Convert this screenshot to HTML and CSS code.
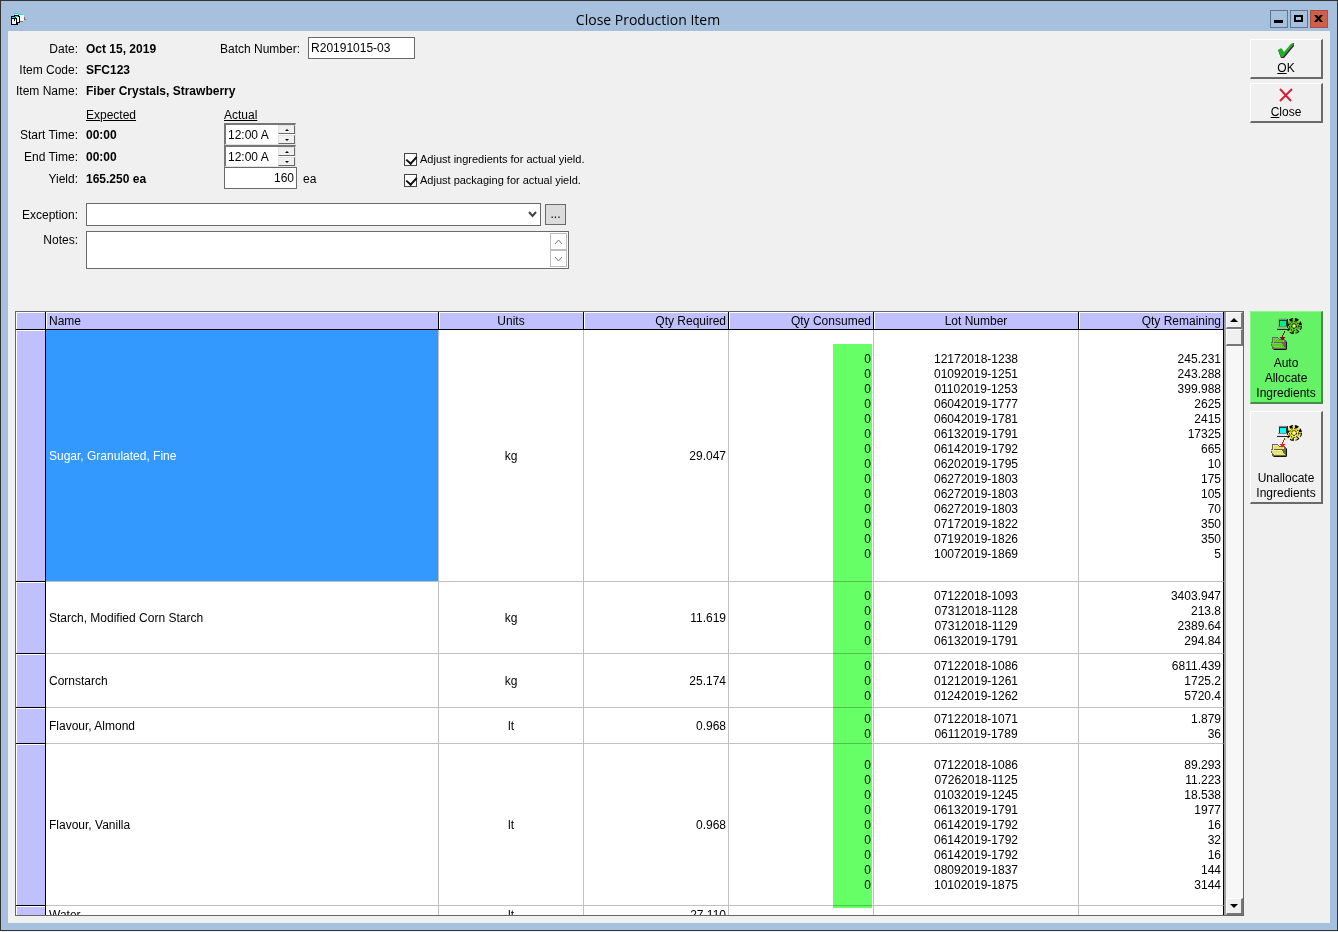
FILE: index.html
```html
<!DOCTYPE html>
<html lang="en">

<head>
    <meta charset="UTF-8">
    <title>Close Production Item</title>
    <link rel="stylesheet" href="styles.css">
</head>

<body>
    <!-- icon shared by the two allocate buttons -->
    <svg class="defs" width="0" height="0" aria-hidden="true">
        <symbol id="allocate" viewBox="0 0 32 32">
            <!-- gear -->
            <circle cx="24" cy="8" r="6.500" fill="none" stroke="#000" stroke-width="3" stroke-dasharray="3.500 1.600" />
            <circle cx="24" cy="8" r="6" fill="none" class="gear-teeth" stroke-width="2" stroke-dasharray="2.500 2.600" stroke-dashoffset="-.500" />
            <circle class="gear" cx="24" cy="8" r="5" />
            <circle cx="24" cy="8" r="4.500" fill="none" stroke="#111" stroke-dasharray="1.500 1.500" />
            <circle cx="24" cy="8" r="2.500" fill="none" stroke="#000" stroke-dasharray="2 1" />
            <circle cx="24" cy="8" r="1" fill="#fff" />
            <g shape-rendering="crispEdges">
                <!-- computer -->
                <path d="M8 1h10v8H8z" fill="#7d8a8a" />
                <path class="case" d="M8 0h9v1H9v7H8zM8 9h10v2H7v-1h1z" />
                <path d="M9 2h8v6H9z" fill="#333" />
                <path class="screen" d="M10 3h6v5h-6z" />
                <path d="M7 11h11v1H7zM17 1h1v9h-1z" fill="#222" />
                <!-- folder -->
                <path d="M2 19h5l2 2h6l2 3v7l-1 1H3l-2-5v-3h1z" fill="#666" />
                <path class="case" d="M3 20h4l2 2h5v2H5l-2 1z" />
                <path class="folder" d="M4 21h3l2 1h4v2H4z" />
                <path class="folder" d="M1 25h11l3 5H4z" />
                <path class="case" d="M1 25h11v1H2zM3 28h9v1H3z" />
                <path d="M4 31h12v1H4zM16 24h1v7h-1z" fill="#111" />
            </g>
            <path class="arrow" d="M15 13v2h-1v2h-1v2h2.500l-3 3.500-3-3.500H12v-2h1v-2h1v-2z" />
        </symbol>
    </svg>

    <div class="window">
        <header class="title-bar">
            <svg class="app-icon" width="16" height="16" viewBox="0 0 16 16" shape-rendering="crispEdges">
                <path d="M5 3h8v1h1v6h-3v1H6z" fill="#f4f4f4" />
                <path d="M4 2h4v1H4zM8 3h5v1H8zM6 4h3v1H6z" fill="#00e5e5" />
                <path d="M14 6h1v2h1v1h-2zM10 10h3v1h-3z" fill="#777" />
                <path d="M4 4h5v1h1v7H8v2H1V5h3z" fill="#000" />
                <path d="M2 8h4v5H2zM6 6h3v5H7V7H6z" fill="#fff" />
                <path d="M2 6h3v1H2zM5 5h3v1H5z" fill="#00e5e5" />
                <path d="M4 8h1v2H4z" fill="#000" />
            </svg>
            <h1>Close Production Item</h1>
            <div class="window-buttons">
                <button type="button" aria-label="Minimize">
                    <svg width="16" height="16" viewBox="0 0 16 16"><path d="M3 9h9v3H3z" /></svg>
                </button>
                <button type="button" aria-label="Maximize">
                    <svg width="16" height="16" viewBox="0 0 16 16"><path fill-rule="evenodd" d="M3 4h9v7H3zM5 6v3h5V6z" /></svg>
                </button>
                <button type="button" class="win-close" aria-label="Close window">
                    <svg width="16" height="16" viewBox="0 0 16 16"><path d="M3 4h3l1.500 2L9 4h3L9 7.500l3 3.500H9L7.500 9 6 11H3l3-3.500z" /></svg>
                </button>
            </div>
        </header>

        <main class="content">
            <form class="top">
                <div class="fields">
                    <div class="row">
                        <span class="label">Date:</span>
                        <b class="date">Oct 15, 2019</b>
                        <label for="batch">Batch Number:</label>
                        <input type="text" id="batch" class="text-box batch" value="R20191015-03">
                    </div>
                    <div class="row info">
                        <span class="label">Item Code:</span>
                        <b>SFC123</b>
                    </div>
                    <div class="row info">
                        <span class="label">Item Name:</span>
                        <b>Fiber Crystals, Strawberry</b>
                    </div>

                    <div class="actuals">
                        <div class="times">
                            <div class="row heads">
                                <span class="label"></span>
                                <span class="expected"><u>Expected</u></span>
                                <span><u>Actual</u></span>
                            </div>
                            <div class="row">
                                <label class="label" for="start">Start Time:</label>
                                <b class="expected">00:00</b>
                                <div class="spinner">
                                    <input type="text" id="start" value="12:00 A">
                                    <div class="spin-buttons">
                                        <button type="button" aria-label="Later start"><i class="tri up"></i></button>
                                        <button type="button" aria-label="Earlier start"><i class="tri down"></i></button>
                                    </div>
                                </div>
                            </div>
                            <div class="row">
                                <label class="label" for="end">End Time:</label>
                                <b class="expected">00:00</b>
                                <div class="spinner">
                                    <input type="text" id="end" value="12:00 A">
                                    <div class="spin-buttons">
                                        <button type="button" aria-label="Later end"><i class="tri up"></i></button>
                                        <button type="button" aria-label="Earlier end"><i class="tri down"></i></button>
                                    </div>
                                </div>
                            </div>
                            <div class="row">
                                <label class="label" for="yield">Yield:</label>
                                <b class="expected">165.250 ea</b>
                                <div class="yield">
                                    <input type="text" id="yield" class="text-box" value="160">
                                    <span>ea</span>
                                </div>
                            </div>
                        </div>
                        <div class="checks">
                            <label><input type="checkbox" checked>Adjust ingredients for actual yield.</label>
                            <label><input type="checkbox" checked>Adjust packaging for actual yield.</label>
                        </div>
                    </div>

                    <div class="row exception">
                        <label class="label" for="exception">Exception:</label>
                        <div class="drop-down">
                            <select id="exception">
                                <option></option>
                            </select>
                            <svg width="9" height="7" viewBox="0 0 9 7"><path d="M1 1l3.500 4L8 1" /></svg>
                        </div>
                        <button type="button" class="more">...</button>
                    </div>
                    <div class="row notes">
                        <label class="label" for="notes">Notes:</label>
                        <div class="notes-box">
                            <textarea id="notes"></textarea>
                            <div class="notes-scroll">
                                <button type="button" aria-label="Scroll notes up">
                                    <svg width="9" height="6" viewBox="0 0 9 6"><path d="M1 5l3.500-4L8 5" /></svg>
                                </button>
                                <button type="button" aria-label="Scroll notes down">
                                    <svg width="9" height="6" viewBox="0 0 9 6"><path d="M1 1l3.500 4L8 1" /></svg>
                                </button>
                            </div>
                        </div>
                    </div>
                </div>

                <div class="buttons">
                    <button type="button" class="btn small">
                        <svg width="18" height="17" viewBox="0 0 18 17">
                            <path d="M1 8l4-1 2 4 7-9 3-1v3L7 16H4z" fill="#4a1050" />
                            <path d="M1 8l3-2 3 4 7-8h3L6 15H4z" fill="#1fb31f" />
                        </svg>
                        <span><u>O</u>K</span>
                    </button>
                    <button type="button" class="btn small">
                        <svg width="18" height="17" viewBox="0 0 18 17">
                            <path d="M3 3l11 12M15 3L3 15" fill="none" stroke="#d81e3a" stroke-width="2" />
                        </svg>
                        <span><u>C</u>lose</span>
                    </button>
                </div>
            </form>

            <div class="bottom">
                <div class="grid">
                    <div class="grid-view">
                        <table>
                            <colgroup>
                                <col class="c-head">
                                <col>
                                <col class="c-mid">
                                <col class="c-mid">
                                <col class="c-mid">
                                <col class="c-lot">
                                <col class="c-mid">
                            </colgroup>
                            <thead>
                                <tr>
                                    <th></th>
                                    <th class="left">Name</th>
                                    <th>Units</th>
                                    <th class="right">Qty Required</th>
                                    <th class="right">Qty Consumed</th>
                                    <th>Lot Number</th>
                                    <th class="right">Qty Remaining</th>
                                </tr>
                            </thead>
                            <tbody>
                                <tr class="h14">
                                    <th></th>
                                    <td class="left selected">Sugar, Granulated, Fine</td>
                                    <td>kg</td>
                                    <td class="right">29.047</td>
                                    <td class="right">0<br>0<br>0<br>0<br>0<br>0<br>0<br>0<br>0<br>0<br>0<br>0<br>0<br>0</td>
                                    <td>12172018-1238<br>01092019-1251<br>01102019-1253<br>06042019-1777<br>06042019-1781<br>06132019-1791<br>06142019-1792<br>06202019-1795<br>06272019-1803<br>06272019-1803<br>06272019-1803<br>07172019-1822<br>07192019-1826<br>10072019-1869</td>
                                    <td class="right">245.231<br>243.288<br>399.988<br>2625<br>2415<br>17325<br>665<br>10<br>175<br>105<br>70<br>350<br>350<br>5</td>
                                </tr>
                                <tr class="h4">
                                    <th></th>
                                    <td class="left">Starch, Modified Corn Starch</td>
                                    <td>kg</td>
                                    <td class="right">11.619</td>
                                    <td class="right">0<br>0<br>0<br>0</td>
                                    <td>07122018-1093<br>07312018-1128<br>07312018-1129<br>06132019-1791</td>
                                    <td class="right">3403.947<br>213.8<br>2389.64<br>294.84</td>
                                </tr>
                                <tr class="h3">
                                    <th></th>
                                    <td class="left">Cornstarch</td>
                                    <td>kg</td>
                                    <td class="right">25.174</td>
                                    <td class="right">0<br>0<br>0</td>
                                    <td>07122018-1086<br>01212019-1261<br>01242019-1262</td>
                                    <td class="right">6811.439<br>1725.2<br>5720.4</td>
                                </tr>
                                <tr class="h2">
                                    <th></th>
                                    <td class="left">Flavour, Almond</td>
                                    <td>lt</td>
                                    <td class="right">0.968</td>
                                    <td class="right">0<br>0</td>
                                    <td>07122018-1071<br>06112019-1789</td>
                                    <td class="right">1.879<br>36</td>
                                </tr>
                                <tr class="h9">
                                    <th></th>
                                    <td class="left">Flavour, Vanilla</td>
                                    <td>lt</td>
                                    <td class="right">0.968</td>
                                    <td class="right">0<br>0<br>0<br>0<br>0<br>0<br>0<br>0<br>0</td>
                                    <td>07122018-1086<br>07262018-1125<br>01032019-1245<br>06132019-1791<br>06142019-1792<br>06142019-1792<br>06142019-1792<br>08092019-1837<br>10102019-1875</td>
                                    <td class="right">89.293<br>11.223<br>18.538<br>1977<br>16<br>32<br>16<br>144<br>3144</td>
                                </tr>
                                <tr class="h1">
                                    <th></th>
                                    <td class="left">Water</td>
                                    <td>lt</td>
                                    <td class="right">27.110</td>
                                    <td></td>
                                    <td></td>
                                    <td></td>
                                </tr>
                            </tbody>
                        </table>
                        <!-- marker over the consumed quantities -->
                        <div class="highlight"></div>
                    </div>
                    <div class="scroll-bar">
                        <button type="button" aria-label="Scroll up"><i class="tri up"></i></button>
                        <div class="thumb"></div>
                        <div class="track"></div>
                        <button type="button" aria-label="Scroll down"><i class="tri down"></i></button>
                    </div>
                </div>
                <div class="buttons">
                    <button type="button" class="btn big auto">
                        <svg width="32" height="32"><use href="#allocate" /></svg>
                        <span>Auto<br>Allocate<br>Ingredients</span>
                    </button>
                    <button type="button" class="btn big">
                        <svg width="32" height="32"><use href="#allocate" /></svg>
                        <span>Unallocate<br>Ingredients</span>
                    </button>
                </div>
            </div>
        </main>
    </div>
</body>

</html>
```
FILE: styles.css
```css
* {
    box-sizing: border-box;
}

body {
    margin: 0;
    font: 12px/15px "Liberation Sans", Arial, sans-serif;
    color: #000;
    background: #f0f0f0;
}

button,
input,
select,
textarea {
    margin: 0;
    padding: 0;
    font: inherit;
    color: inherit;
    border-radius: 0;
}

.defs {
    position: absolute;
}

/* window frame */
.window {
    display: flex;
    flex-direction: column;
    height: calc(100vh - 1px);
    border: 1px solid #333;
    padding: 0 7px 7px 7px;
    background: #a6c0de;
}

.title-bar {
    flex: none;
    display: flex;
    align-items: center;
    height: 30px;
    padding: 6px 2px 0 2px;
}

.app-icon {
    flex: none;
}

.title-bar h1 {
    flex: 1;
    margin: 0;
    padding-top: 1px;
    text-align: center;
    font: 14px/18px "Open Sans", "Noto Sans", sans-serif;
}

.window-buttons {
    display: flex;
    gap: 2px;
}

.window-buttons button {
    width: 18px;
    height: 18px;
    border: 1px solid #5f7590;
    background: #a6c0de;
}

.window-buttons svg {
    display: block;
}

.window-buttons .win-close {
    border-color: #a8503f;
    background: #cf5f4b;
}

.content {
    flex: 1;
    min-height: 0;
    display: flex;
    flex-direction: column;
    padding: 6px 7px 7px 7px;
    background: #f0f0f0;
}

/* form */
.top {
    flex: none;
    display: flex;
    justify-content: space-between;
    min-height: 274px;
}

.row {
    display: flex;
    align-items: center;
    gap: 8px;
    height: 22px;
}

.row.info {
    height: 21px;
}

.row.heads {
    height: 17px;
}

.row span,
.row b,
.row label {
    padding-top: 2px;
}

.label {
    flex: none;
    width: 63px;
    text-align: right;
    white-space: nowrap;
}

.date {
    width: 126px;
}

.expected {
    width: 130px;
}

.text-box {
    height: 22px;
    border: 1px solid #6a6a6a;
    padding: 0 2px;
    background: #fff;
}

.batch {
    width: 107px;
}

.actuals {
    display: flex;
    margin-top: 5px;
}

.times {
    width: 389px;
}

.spinner {
    display: flex;
    width: 72px;
    height: 22px;
    border: 1px solid #e3e3e3;
    border-top: 2px solid #777;
    border-left: 2px solid #777;
    background: #fff;
}

.spinner input {
    width: 52px;
    border: 0;
    padding: 1px 0 0 2px;
    background: none;
}

.spin-buttons {
    display: flex;
    flex-direction: column;
    gap: 1px;
}

.spin-buttons button {
    display: flex;
    align-items: center;
    justify-content: center;
    width: 17px;
    height: 9px;
    border: 1px solid #e3e3e3;
    border-right-color: #696969;
    border-bottom-color: #696969;
    background: #f0f0f0;
}

.tri {
    border: 4px solid transparent;
}

.spin-buttons .tri {
    border-width: 2px;
}

.tri.up {
    border-top: 0;
    border-bottom-color: #000;
}

.tri.down {
    border-bottom: 0;
    border-top-color: #000;
}

.spin-buttons .up {
    border-top: 0;
}

.spin-buttons .down {
    border-bottom: 0;
}

.yield {
    display: flex;
    align-items: center;
    gap: 6px;
}

.yield input {
    width: 73px;
    text-align: right;
}

.checks {
    padding-top: 43px;
    font-size: 11px;
}

.checks label {
    display: flex;
    align-items: center;
    gap: 3px;
    height: 21px;
}

.checks input {
    appearance: none;
    position: relative;
    width: 13px;
    height: 13px;
    border: 1px solid #444;
    background: #fff;
}

.checks input:checked::after {
    content: "";
    position: absolute;
    left: 3px;
    top: 0;
    width: 5px;
    height: 8px;
    border: solid #111;
    border-width: 0 2px 2px 0;
    transform: rotate(42deg);
}

.exception {
    height: 23px;
    margin-top: 12px;
}

.drop-down {
    position: relative;
    width: 455px;
    height: 23px;
}

.drop-down select {
    appearance: none;
    display: block;
    width: 100%;
    height: 100%;
    border: 1px solid #6a6a6a;
    background: #fff;
}

.drop-down svg {
    position: absolute;
    right: 4px;
    top: 8px;
    fill: none;
    stroke: #444;
    stroke-width: 2;
    pointer-events: none;
}

.more {
    width: 21px;
    height: 21px;
    margin-left: -4px;
    border: 1px solid #6a6a6a;
    background: #dcdcdc;
}

.notes {
    align-items: flex-start;
    height: 38px;
    margin-top: 5px;
}

.notes-box {
    display: flex;
    width: 483px;
    height: 38px;
    border: 1px solid #6a6a6a;
    padding: 1px;
    background: #fff;
}

.notes-box textarea {
    flex: 1;
    border: 0;
    resize: none;
    overflow: hidden;
    background: none;
}

.notes-scroll {
    display: flex;
    flex-direction: column;
}

.notes-scroll button {
    display: flex;
    align-items: center;
    justify-content: center;
    width: 17px;
    height: 17px;
    border: 1px solid #bdbdbd;
    background: #fff;
}

.notes-scroll svg {
    fill: none;
    stroke: #777;
}

/* raised buttons on the right */
.buttons {
    flex: none;
    width: 73px;
    display: flex;
    flex-direction: column;
    gap: 4px;
    padding-top: 2px;
}

.btn {
    --screen: #0ff;
    --paint: #f0e838;
    --case: #e4e4e4;
    --arrow: #f01818;
    display: flex;
    flex-direction: column;
    align-items: center;
    border: 1px solid #fff;
    border-right: 2px solid #6a6a6a;
    border-bottom: 2px solid #6a6a6a;
    background: #f0f0f0;
}

.btn.small {
    height: 40px;
    padding-top: 2px;
}

.btn.small span {
    line-height: 18px;
}

.btn.big {
    height: 93px;
    justify-content: space-between;
    padding: 13px 0 1px 0;
}

.btn.auto {
    --screen: #00f088;
    --paint: #68c818;
    --case: #60d860;
    --arrow: #801010;
    padding-top: 6px;
    border-color: #8df58d #4c8a4c #4c8a4c #8df58d;
    background: #66f266;
}

.screen {
    fill: var(--screen);
}

.case {
    fill: var(--case);
}

.gear,
.folder {
    fill: var(--paint);
}

.gear-teeth {
    stroke: var(--paint);
}

.arrow {
    fill: var(--arrow);
}

/* ingredients grid */
.bottom {
    flex: 1;
    min-height: 0;
    display: flex;
    gap: 6px;
}

.bottom .buttons {
    gap: 7px;
    padding-top: 0;
}

.grid {
    flex: 1;
    display: flex;
    border: 1px solid #666;
    background: #fff;
}

.grid-view {
    flex: 1;
    position: relative;
    overflow: hidden;
}

table {
    width: 100%;
    table-layout: fixed;
    border-collapse: separate;
    border-spacing: 0;
}

.c-head {
    width: 30px;
}

.c-mid {
    width: 145px;
}

.c-lot {
    width: 205px;
}

th,
td {
    padding: 2px 2px 0 2px;
    text-align: center;
    font-weight: normal;
}

th {
    border-right: 1px solid #000;
    border-bottom: 1px solid #000;
    background: #c0c0ff;
    box-shadow: inset 1px 1px #fff;
}

thead th {
    height: 18px;
}

td {
    border-right: 1px solid #c0c0c0;
    border-bottom: 1px solid #c0c0c0;
}

td:last-child {
    border-right-color: #000;
}

.left {
    padding-left: 3px;
    text-align: left;
}

.right {
    text-align: right;
}

td.selected {
    color: #fff;
    background: #39f;
}

.h14 {
    height: 252px;
}

.h9 {
    height: 162px;
}

.h4 {
    height: 72px;
}

.h3 {
    height: 54px;
}

.h2 {
    height: 36px;
}

.h1 {
    height: 18px;
}

.highlight {
    position: absolute;
    top: 32px;
    right: 352px;
    width: 39px;
    height: 564px;
    background: #6f6;
    mix-blend-mode: multiply;
    pointer-events: none;
}

.scroll-bar {
    display: flex;
    flex-direction: column;
    width: 19px;
    border-left: 2px solid #a0a0a0;
}

.scroll-bar button,
.thumb {
    flex: none;
    display: flex;
    align-items: center;
    justify-content: center;
    height: 17px;
    border: 1px solid #fff;
    border-right: 2px solid #777;
    border-bottom: 2px solid #777;
    background: #f0f0f0;
}

.track {
    flex: 1;
    background: #f7f7f7;
}
```
